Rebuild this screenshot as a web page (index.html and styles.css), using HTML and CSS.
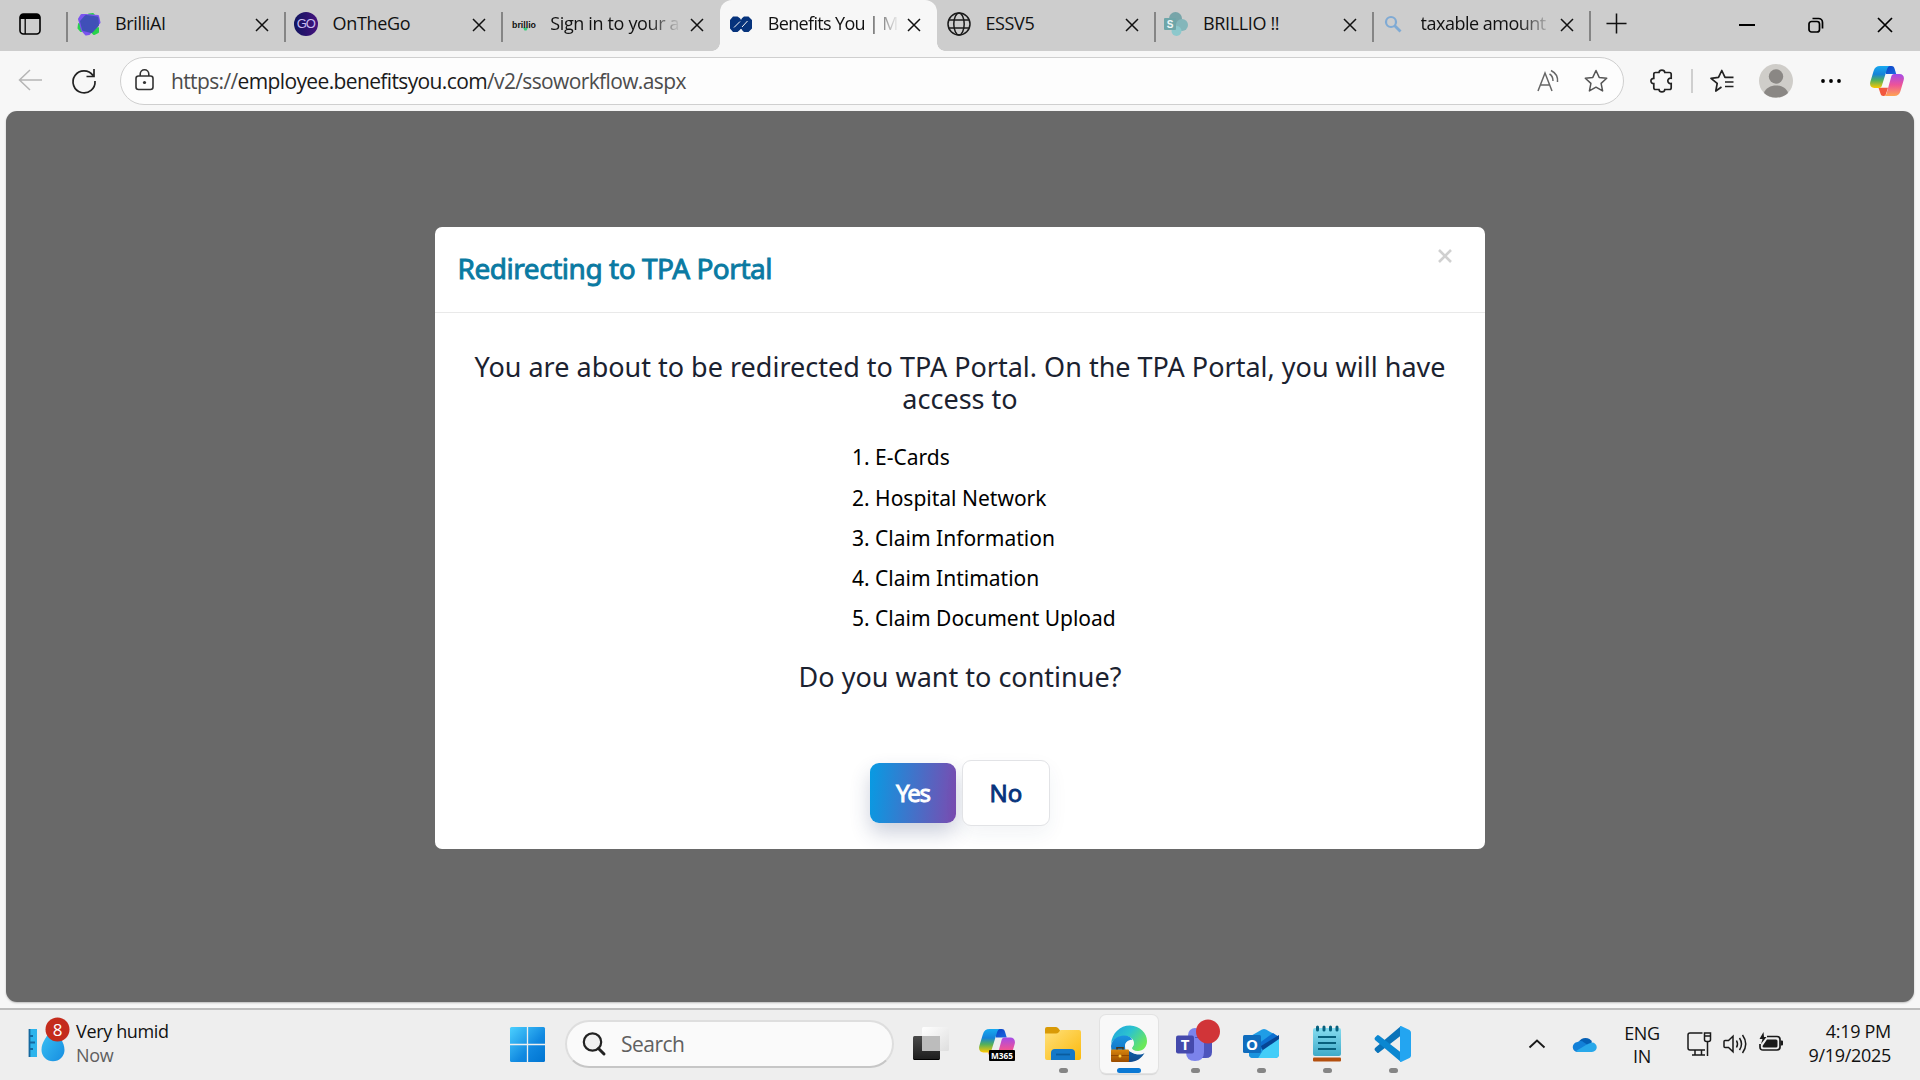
FILE: index.html
```html
<!DOCTYPE html>
<html lang="en">
<head>
<meta charset="utf-8">
<title>Benefits You</title>
<link rel="stylesheet" href="styles.css">
</head>
<body>
<svg class="defs" width="0" height="0">
  <defs>
    <linearGradient id="cpTop" x1="0" y1="0" x2="0" y2="1"><stop offset="0" stop-color="#17a9f0"/><stop offset=".38" stop-color="#1683d8"/><stop offset=".65" stop-color="#52b05c"/><stop offset="1" stop-color="#ffc800"/></linearGradient>
    <linearGradient id="cpBot" x1="0" y1="0" x2="0" y2="1"><stop offset="0" stop-color="#a54be8"/><stop offset=".5" stop-color="#ee5398"/><stop offset="1" stop-color="#ffa552"/></linearGradient>
    <linearGradient id="cpBlue" x1="0" y1="0" x2="1" y2="1"><stop offset="0" stop-color="#0b3fc4"/><stop offset="1" stop-color="#1b6be0"/></linearGradient>
    <linearGradient id="win" x1="0" y1="0" x2="1" y2="1"><stop offset="0" stop-color="#4bd0ff"/><stop offset=".6" stop-color="#1088e0"/><stop offset="1" stop-color="#0074d1"/></linearGradient>
    <linearGradient id="folder" x1="0" y1="0" x2="1" y2="1"><stop offset="0" stop-color="#ffe07a"/><stop offset="1" stop-color="#fbb90c"/></linearGradient>
    <linearGradient id="edgeTop" x1="0" y1="0" x2="1" y2=".6"><stop offset="0" stop-color="#1d9fe0"/><stop offset=".5" stop-color="#2cc3cf"/><stop offset="1" stop-color="#6be85a"/></linearGradient>
    <linearGradient id="edgeLow" x1="0" y1="0" x2="0" y2="1"><stop offset="0" stop-color="#0a63ae"/><stop offset="1" stop-color="#124a8c"/></linearGradient>
    <linearGradient id="edgeMid" x1="0" y1="0" x2="0" y2="1"><stop offset="0" stop-color="#1b93e0"/><stop offset="1" stop-color="#0b63b5"/></linearGradient>
    <linearGradient id="case" x1="0" y1="0" x2="0" y2="1"><stop offset="0" stop-color="#d9860d"/><stop offset="1" stop-color="#9a4c00"/></linearGradient>
    <linearGradient id="drop" x1="0" y1="0" x2="1" y2="1"><stop offset="0" stop-color="#3cc4f5"/><stop offset="1" stop-color="#178de0"/></linearGradient>
    <linearGradient id="note" x1="0" y1="0" x2="0" y2="1"><stop offset="0" stop-color="#86dcf0"/><stop offset="1" stop-color="#3fabc9"/></linearGradient>
    <linearGradient id="dark" x1="0" y1="0" x2="0" y2="1"><stop offset="0" stop-color="#4a4a4a"/><stop offset="1" stop-color="#1c1c1c"/></linearGradient>
    <linearGradient id="glass" x1="0" y1="0" x2="1" y2="1"><stop offset="0" stop-color="#fff"/><stop offset="1" stop-color="#dedede"/></linearGradient>
    <linearGradient id="go" x1="0" y1="0" x2="1" y2="0"><stop offset="0" stop-color="#10155f"/><stop offset="1" stop-color="#46127e"/></linearGradient>
    <symbol id="x" viewBox="0 0 14 14"><path d="M1 1l12 12M13 1L1 13" fill="none" stroke="#111" stroke-width="1.5"/></symbol>
    <symbol id="copilot" viewBox="0 0 34 30">
      <path d="M15 0h6.500c2 0 2.700 1.200 3.200 3l1.500 5H16z" fill="url(#cpBlue)"/>
      <path d="M8.500 21.800H18l-2 6.200c-.5 1.400-1.300 2-2.600 2-2 0-2.600-1.200-3.100-3z" fill="#f2583e"/>
      <path d="M24 8h5.500c3.400 0 5.100 2.500 4.200 6l-3.200 11c-.9 3.500-3 5-6.200 5h-10.500c1.600 0 2.400-1.200 3-3.200l4.400-16C21.800 8.800 22.500 8 24 8z" fill="url(#cpBot)"/>
      <path d="M10 0h10c-1.600 0-2.300 1.300-3 3.300l-4.700 15C11.600 20.800 11 22 9 22H4.200C1 22-.6 19.500.3 16L3.600 5C4.600 1.500 6.700 0 10 0z" fill="url(#cpTop)"/>
    </symbol>
  </defs>
</svg>

<header class="tabstrip">
  <svg class="tab-actions" viewBox="0 0 22 22"><rect x="1" y="1" width="20" height="20" rx="3.500" fill="none" stroke="#000" stroke-width="1.600"/><path d="M1 6V4.500A3.500 3.500 0 0 1 4.500 1h13A3.500 3.500 0 0 1 21 4.500V6z"/><path d="M6.200 6v15" stroke="#000" stroke-width="1.300"/></svg>
  <nav class="tabs">
    <div class="tab">
      <svg class="fav" viewBox="0 0 24 24"><g stroke-width="2" stroke-linejoin="round"><path d="M12 2.500l4-.5 3 4-5 2zM2 12l4 6-2 1-2.500-3zM21 16v4l-4 2-2-2z" fill="#27d34b" stroke="#27d34b"/><path d="M4.500 3H9l12 1 1.500 6.500L12 22l-3 .5-4-4.500L2 7z" fill="#7a54ee" stroke="#7a54ee"/></g><path d="M9 4.500l11 1.500.500 7-6 6.500-8-2-2-8z" fill="#4050b8" stroke="#4050b8" stroke-width="3" stroke-linejoin="round"/></svg>
      <span class="title">BrilliAI</span><svg class="close"><use href="#x"/></svg>
    </div>
    <div class="tab">
      <svg class="fav" viewBox="0 0 24 24"><circle cx="12" cy="12" r="12" fill="url(#go)"/><text x="11.800" y="16" class="go-text">GO</text></svg>
      <span class="title">OnTheGo</span><svg class="close"><use href="#x"/></svg>
    </div>
    <div class="tab">
      <svg class="fav" viewBox="0 0 24 24"><path d="M11 15.500h5l-1.500 3h-2z" fill="#35d07a"/><text x="0" y="16" class="brillio-text" textLength="24" lengthAdjust="spacingAndGlyphs">brillio</text></svg>
      <span class="title fade">Sign in to your a</span><svg class="close"><use href="#x"/></svg>
    </div>
    <div class="tab active">
      <svg class="fav" viewBox="0 0 24 24"><path d="M4 4.500h4.500L12 7l3-2.500h4.500L23 8v8.500L19.500 20H15l-3-3-3.500 3H4l-3-3.500V8z" fill="#06337c"/><path d="M5 15.500l6-6M13 15l5.500-6M12 4v3.500M12 17v3.500" stroke="#f7f7f7" stroke-width="1"/></svg>
      <span class="title fade tight">Benefits You | M</span><svg class="close"><use href="#x"/></svg>
    </div>
    <div class="tab nosep">
      <svg class="fav" viewBox="0 0 24 24"><g fill="none" stroke="#1a1a1a" stroke-width="1.500"><circle cx="12" cy="12" r="11"/><ellipse cx="12" cy="12" rx="5.200" ry="11"/><path d="M2 8h20M2 16h20"/></g></svg>
      <span class="title">ESSV5</span><svg class="close"><use href="#x"/></svg>
    </div>
    <div class="tab">
      <svg class="fav" viewBox="0 0 24 24"><circle cx="11.500" cy="6.500" r="6.500" fill="#77a5a9"/><circle cx="18" cy="13" r="6" fill="#83b6ba"/><circle cx="12.500" cy="19" r="5" fill="#8cc8cc"/><rect y="6" width="12" height="12" rx="1" fill="#6ea6a9"/><text x="6" y="15.500" class="sp-text">S</text></svg>
      <span class="title">BRILLIO !!</span><svg class="close"><use href="#x"/></svg>
    </div>
    <div class="tab">
      <svg class="fav" viewBox="0 0 24 24"><g fill="none" stroke="#7faad4" stroke-width="2.200"><circle cx="9" cy="10" r="5"/><path d="M12.500 13.500l6 6" stroke-width="2.800"/></g></svg>
      <span class="title fade tax">taxable amount</span><svg class="close"><use href="#x"/></svg>
    </div>
    <div class="newtab"><svg viewBox="0 0 22 22"><path d="M11 .5v21M.5 11h21" stroke="#111" stroke-width="1.600"/></svg></div>
  </nav>
  <div class="winctl">
    <svg viewBox="0 0 16 16"><path d="M0 8h16" stroke="#000" stroke-width="2"/></svg>
    <svg viewBox="0 0 16 16"><g fill="none" stroke="#000" stroke-width="1.700"><rect x="1" y="4.500" width="10.500" height="10.500" rx="2.500"/><path d="M4.500 1.500h6a4 4 0 0 1 4 4v6"/></g></svg>
    <svg viewBox="0 0 16 16"><path d="M1 1l14 14M15 1L1 15" stroke="#000" stroke-width="1.700"/></svg>
  </div>
</header>

<section class="toolbar">
  <svg class="i24 back" viewBox="0 0 24 24"><path d="M12 2L1.500 12 12 22M1.500 12H24" fill="none" stroke="#b5b5b5" stroke-width="1.500"/></svg>
  <svg class="i24 refresh" viewBox="0 0 24 24"><path d="M21 6.500A11 11 0 1 0 23 12M22 0v7.500h-7.500" fill="none" stroke="#222" stroke-width="1.700"/></svg>
  <div class="address">
    <svg class="lock" viewBox="0 0 19 22"><g fill="none" stroke="#333" stroke-width="1.600"><rect x="1" y="7" width="17" height="13.500" rx="2.500"/><path d="M5.200 7V5a4.300 4.300 0 0 1 8.600 0v2"/></g><circle cx="9.500" cy="13.500" r="1.600" fill="#333"/></svg>
    <span class="url">https://<b>employee.benefitsyou.com</b>/v2/ssoworkflow.aspx</span>
    <svg class="i24 read" viewBox="0 0 24 24"><g fill="none" stroke="#666" stroke-width="1.500"><path d="M1 22L8 4l7 18M3.500 16h9M12.500 5c2.500 1.500 3.500 4 3.500 7M14 1.500c5 2.500 7 7 6.500 11.500"/></g></svg>
    <svg class="i24" viewBox="0 0 24 24"><path d="M12 1.500l3.200 6.900 7.500.9-5.600 5.100 1.500 7.500L12 18.200l-6.600 3.700 1.500-7.500L1.300 9.300l7.500-.9z" fill="none" stroke="#555" stroke-width="1.500" stroke-linejoin="round"/></svg>
  </div>
  <svg class="i24 puzzle" viewBox="0 0 24 24"><path d="M5.500 3.500H9C9.300.3 14.500.3 14.800 3.500h4.700c1 0 1.700.7 1.700 1.700v4c-4.500-.7-4.500 6 0 5.300v4.300c0 1-.7 1.700-1.700 1.700h-4.700c-.3 3.200-5.500 3.200-5.800 0H5.500c-1 0-1.700-.7-1.700-1.700v-4.100C0 14.700 0 9.300 3.800 9.300V5.200c0-1 .7-1.700 1.700-1.700z" fill="none" stroke="#222" stroke-width="1.700"/></svg>
  <i class="vsep"></i>
  <svg class="i24 favs" viewBox="0 0 24 24"><path d="M11.500 18L5.800 22l1.400-7.600L1 9.300l7.500-.9L11.800 1.500 15 8.400h8.500M15 13h8.500M15 17.500h8.500" fill="none" stroke="#222" stroke-width="1.700" stroke-linejoin="round"/></svg>
  <svg class="avatar" viewBox="0 0 34 34"><circle cx="17" cy="17" r="17" fill="#cfcdc9"/><circle cx="17" cy="12.500" r="7.200" fill="#8a8784"/><path d="M5 29c3-10 21-10 24 0-6 6-18 6-24 0z" fill="#8a8784"/></svg>
  <svg class="dots" viewBox="0 0 20 6"><circle cx="2" cy="3" r="1.900"/><circle cx="10" cy="3" r="1.900"/><circle cx="18" cy="3" r="1.900"/></svg>
  <svg class="copilot"><use href="#copilot"/></svg>
</section>

<main class="viewport">
  <div class="page">
    <div class="modal">
      <div class="modal-head">
        <h1>Redirecting to TPA Portal</h1>
        <svg class="modal-x" viewBox="0 0 14 14"><path d="M1 1l12 12M13 1L1 13" stroke="#d0d0d0" stroke-width="2.600"/></svg>
      </div>
      <div class="modal-body">
        <p class="lead">You are about to be redirected to TPA Portal. On the TPA Portal, you will have<br>access to</p>
        <ol><li>1. E-Cards</li><li>2. Hospital Network</li><li>3. Claim Information</li><li>4. Claim Intimation</li><li>5. Claim Document Upload</li></ol>
        <p class="ask">Do you want to continue?</p>
        <div class="actions"><button class="yes">Yes</button><button class="no">No</button></div>
      </div>
    </div>
  </div>
</main>

<footer class="taskbar">
  <div class="weather">
    <svg viewBox="0 0 42 54"><path d="M1 13h8v28H1z" fill="#2db4ec"/><path d="M1.500 13v28M1 20h4M1 26.500h6M1 33h4" stroke="#14689f" stroke-width="1.800" fill="none"/><path d="M25 12c6 8 11.500 14 11.500 22a11.500 11.200 0 0 1-23 0C13.500 26 19 20 25 12z" fill="url(#drop)"/><circle cx="29.500" cy="13.500" r="12" fill="#c42b1c"/><text x="29.500" y="19.500" class="badge-text">8</text></svg>
    <div class="wtext"><span>Very humid</span><span class="dim">Now</span></div>
  </div>
  <div class="center">
    <svg class="winlogo" viewBox="0 0 35 35"><rect width="35" height="35" rx="1.500" fill="url(#win)"/><path d="M17.500 0v35M0 17.500h35" stroke="#eee" stroke-width="1.300"/></svg>
    <div class="search"><svg viewBox="0 0 24 24"><circle cx="10.500" cy="10" r="8.700" fill="#f1f1f1" stroke="#222" stroke-width="2.200"/><path d="M16.500 16.500l5.500 5.500" stroke="#222" stroke-width="3" stroke-linecap="round"/></svg><span>Search</span></div>
    <div class="apps">
      <div class="app"><svg viewBox="0 0 36 36"><rect y="10" width="27" height="24" rx="1.500" fill="url(#dark)"/><path d="M1 33.500h25" stroke="#000"/><rect x="9" y="1" width="27" height="24" rx="1.500" fill="url(#glass)"/><path d="M9 10h18v15H10q-1 0-1-1z" fill="#bcbcbc"/></svg></div>
      <div class="app"><svg viewBox="0 0 36 36"><svg x="0" y="1" width="36" height="31"><use href="#copilot"/></svg><rect x="10" y="24" width="26" height="11" rx="1" fill="#000"/><text x="23" y="33" class="m365" textLength="22" lengthAdjust="spacingAndGlyphs">M365</text></svg></div>
      <div class="app run"><svg viewBox="0 0 36 36"><path d="M0 3q0-2 2-2h9q1.500 0 2.500 1.500L15 4.500V10H0z" fill="#d99a06"/><path d="M0 7.500h11q1.500 0 2.500-1L15.500 4H34q2 0 2 2v26q0 2-2 2H2q-2 0-2-2z" fill="url(#folder)"/><path d="M6 34v-7q0-4 4-4h16q4 0 4 4v7z" fill="#1478c8"/><path d="M11 28.500h14" stroke="#0a5c9e" stroke-width="1.800"/></svg></div>
      <div class="app run current"><svg viewBox="0 0 36 36"><path d="M0 18C1 7 9-.5 19-.5 29 0 36 7 36 15c0 6-4 10-9 10-4 0-6-1.500-6-3 0-1 2-2 2-5 0-4-4-7-9-7C7 10 2 14 0 18z" fill="url(#edgeTop)"/><path d="M0 20c1-7 7-10.500 13-10.500 4 0 7 1.500 8.500 4.200-4-.2-7.500 2.500-7.500 6.300C14 29 20 35 27 33c-10 6-27 2-27-13z" fill="url(#edgeMid)"/><path d="M18 21c1 5 5 7.500 10 7.500 2 0 4-.5 5.500-1.500C31 32 25 36 19 36h-6z" fill="url(#edgeLow)"/><path d="M22.500 18.500c0 2-1.700 2.500-1.700 4 0 2 3 3.300 6.500 3.300 2.700 0 5-.6 6.700-1.800-1 2.700-3 4-6 4-6 0-13-3.500-13.700-8.500a4.200 4.800 0 0 1 8.200-1z" fill="#f8f8f8"/><rect y="23.500" width="18" height="12.500" rx="1" fill="url(#case)"/><path d="M0 29.500h18" stroke="#8a4300" stroke-width=".8"/><path d="M6 23.500v-1.700h6v1.700" fill="none" stroke="#47351c" stroke-width="1.600"/><circle cx="9" cy="30" r="1.500" fill="#ffd042"/></svg></div>
      <div class="app run"><svg class="teams" viewBox="0 0 46 44"><circle cx="20" cy="17" r="7" fill="#7b83eb"/><path d="M20 19h17v15q0 6-6 6h-8z" fill="#4e55bd"/><path d="M11 20h18v14q0 9-9 9t-9-9z" fill="#7b83eb"/><rect x="1" y="17.500" width="18" height="18" rx="2" fill="#4449ac"/><text x="10" y="31.500" class="tile">T</text><circle cx="33" cy="13.500" r="12" fill="#d13438"/></svg></div>
      <div class="app run"><svg viewBox="0 0 36 36"><path d="M6 11L19 3.500q2-1 4 0L36 11v17q0 4-4 4H10q-4 0-4-4z" fill="#1f9de6"/><path d="M15 18L30 7l6 4-19 13z" fill="#0d6fd0"/><path d="M18 20L36 9v5L20 25z" fill="#064594"/><path d="M36 13v15q0 4-4 4H15l5-8z" fill="#42cdf8"/><path d="M6 26l14-2-5 8h-5q-4 0-4-4z" fill="#1994df"/><rect y="9" width="18" height="18" rx="1.500" fill="#0f6cbd"/><text x="9" y="23.500" class="tile">O</text></svg></div>
      <div class="app run"><svg viewBox="0 0 36 36"><rect x="4" y="28" width="28" height="6" fill="#eee"/><rect x="4" y="31.500" width="28" height="4" rx="1" fill="#b4500f"/><rect x="4" y="2" width="28" height="28" rx="2" fill="url(#note)"/><path d="M9 11h18M9 17h18M9 23h18" stroke="#07607d" stroke-width="2"/><path d="M8.500 1v3M15 1v3M21.500 1v3M28 1v3" stroke="#07607d" stroke-width="3" stroke-linecap="round"/></svg></div>
      <div class="app run"><svg viewBox="0 0 36 36"><path d="M0 24.500q-1-1.200 0-2.500L26 0v9.500L4 26.500q-1.200 1-2 0z" fill="#0a73b9"/><path d="M0 11.500q-1 1.200 0 2.500L26 36v-9.500L4 9.500q-1.200-1-2 0z" fill="#0b87d1"/><path d="M26 0l8.500 4Q36 5 36 6.500v23q0 1.500-1.500 2.500L26 36q-1 0-1-1V1q0-1 1-1z" fill="#23a5f1"/></svg></div>
    </div>
  </div>
  <div class="tray">
    <svg class="chev" viewBox="0 0 18 10"><path d="M1.500 8.500L9 1.500l7.500 7" fill="none" stroke="#1a1a1a" stroke-width="1.900"/></svg>
    <svg class="cloud" viewBox="0 0 24 16"><path d="M6 6a7 6.200 0 0 1 13 0l-4 6-8-2z" fill="#0560b5"/><path d="M5 16a5 5 0 0 1-.5-10Q8 4 11 6.500L18 11l-8 5z" fill="#1280d8"/><path d="M3 15l10-6q3-2 6-2.500a4.700 4.700 0 0 1 0 9.500H5q-1 0-2-1z" fill="#28a8ea"/></svg>
    <div class="lang"><span>ENG</span><span>IN</span></div>
    <div class="sys">
      <svg viewBox="0 0 24 24"><g fill="none" stroke="#1a1a1a" stroke-width="1.500"><path d="M15.500 1H3Q1 1 1 3v13q0 2 2 2h15M8 18v4.500M14.500 18v4.500M5 23h13M20.500 10v14M17.500 1h6v6.500q0 2-2 2h-2q-2 0-2-2zM17.500 4h6"/></g></svg>
      <svg viewBox="0 0 24 24"><g fill="none" stroke="#1a1a1a" stroke-width="1.500"><path d="M1 9.500q0-1 1-1h3.500L10 4.200v15.600l-4.500-4.300H2q-1 0-1-1zM13.500 8.500q2 3.500 0 7M16.500 6q4 6 0 12M19.500 3q6.500 9 0 18"/></g></svg>
      <svg viewBox="0 0 24 24"><path d="M8 4.500h10q3 0 3 3V15q0 3-3 3H4q-3 0-3-3v-3" fill="none" stroke="#1a1a1a" stroke-width="1.700"/><path d="M8 7.500h9q1.500 0 1.500 1.500v5q0 1.500-1.500 1.500H5q-1.500 0-1.500-1.500zM21.500 8.500h1.500q1 0 1 1v3q0 1-1 1h-1.500zM4.500 0L.5 7h3L2 12l5.500-7H5z" fill="#1a1a1a"/></svg>
    </div>
    <div class="clock"><span>4:19 PM</span><span>9/19/2025</span></div>
  </div>
</footer>
</body>
</html>
```
FILE: styles.css
```css
* { box-sizing: border-box; }
html, body { margin: 0; height: 100%; overflow: hidden; }
body {
  width: 1920px; height: 1080px; display: flex; flex-direction: column;
  background: #f7f7f7; color: #111; font-family: "Open Sans", "Noto Sans", sans-serif;
}
svg { display: block; flex: none; overflow: visible; }
.defs { height: 0; }

/* Tab strip */
.tabstrip { height: 51px; flex: none; display: flex; background: #cdcdcd; }
.tab-actions { width: 22px; height: 22px; margin: 13px 26px 0 19px; }
.tabs { display: flex; }
.tab {
  width: 217.600px; height: 51px; display: flex; align-items: center;
  padding: 0 16px 3px 10px; position: relative; border-radius: 12px 12px 0 0;
}
.tab::before { content: ""; width: 2px; height: 30px; background: #858585; margin: 6px 0 0 -11px; }
.fav { width: 24px; height: 24px; margin-left: 8.500px; }
.title { margin-left: 14.500px; font-size: 18px; line-height: 24px; white-space: nowrap; letter-spacing: -.35px; margin-top: -2px; }
.fade { -webkit-mask-image: linear-gradient(90deg, #000 98px, transparent 131px); mask-image: linear-gradient(90deg, #000 98px, transparent 131px); }
.tight { letter-spacing: -.66px; }
.tax { letter-spacing: -.5px; }
.close { width: 14px; height: 14px; margin: 2px 0 0 auto; }
.active { background: #f7f7f7; }
.active::before, .nosep::before { visibility: hidden; }
.active::after {
  content: ""; position: absolute; left: -8px; right: -8px; bottom: 0; height: 8px;
  background:
    radial-gradient(circle at 0 0, transparent 7.500px, #f7f7f7 8px) left / 8px 8px no-repeat,
    radial-gradient(circle at 100% 0, transparent 7.500px, #f7f7f7 8px) right / 8px 8px no-repeat;
}
.newtab { display: flex; }
.newtab::before { content: ""; width: 2px; height: 30px; margin-top: 11px; margin-left: -1px; background: #858585; }
.newtab svg { width: 21px; height: 21px; margin: 13px 0 0 15px; }
.winctl { display: flex; gap: 53px; margin: 17px 27px 0 auto; }
.winctl svg { width: 16px; height: 16px; }
.go-text { font: 13px "Liberation Sans", sans-serif; fill: #c9bdf0; text-anchor: middle; letter-spacing: -1px; }
.brillio-text { font: bold 9px "Liberation Sans", sans-serif; fill: #111; }
.sp-text { font: bold 10px "Liberation Sans", sans-serif; fill: #eef7f7; text-anchor: middle; }

/* Toolbar */
.toolbar { height: 60px; flex: none; display: flex; align-items: center; padding-left: 18px; }
.i24 { width: 24px; height: 24px; }
.back { margin-top: -2px; }
.refresh { margin-left: 30px; }
.address {
  width: 1504px; height: 48px; margin-left: 24px; padding: 0 15px 0 14px; display: flex; align-items: center;
  background: #fdfdfd; border: 1.500px solid #cfcfcf; border-radius: 24px;
}
.lock { width: 19px; height: 22px; margin-top: -3px; }
.url { margin: 0 auto 0 17px; font-size: 21px; line-height: 28px; color: #4c4c4c; letter-spacing: -.63px; white-space: nowrap; }
.url b { font-weight: 400; color: #1a1a1a; }
.read { margin-right: 23px; }
.puzzle { margin-left: 26px; }
.vsep { width: 2px; height: 24px; margin-left: 17px; background: #cfcfcf; }
.favs { margin-left: 17px; }
.avatar { width: 34px; height: 34px; margin-left: 25px; }
.dots { width: 20px; height: 6px; margin-left: 28px; }
.copilot { width: 34px; height: 30px; margin-left: 29px; }

/* Web page */
.viewport { height: 897px; flex: none; padding: 0 6px; }
.page {
  height: 891px; border-radius: 11px; background: #696969; display: flex; justify-content: center;
  align-items: flex-start; padding-top: 116px; box-shadow: 0 1px 2px #bbb;
}
.modal { width: 1050px; height: 622px; background: #fff; border-radius: 7px; overflow: hidden; font-family: "Noto Sans", sans-serif; }
.modal-head { height: 86px; display: flex; justify-content: space-between; border-bottom: 1px solid #e9e9e9; padding: 0 33.500px 0 22.500px; }
h1 { margin: 22px 0 0; font-weight: 400; font-size: 28px; line-height: 38px; color: #0a7aa2; -webkit-text-stroke: .9px #0a7aa2; letter-spacing: -.46px; white-space: nowrap; }
.modal-x { width: 14px; height: 14px; margin-top: 22px; }
.modal-body { display: flex; flex-direction: column; align-items: center; color: #1b2230; }
.lead, .ask { margin: 0; font-size: 27px; line-height: 32.400px; text-align: center; white-space: nowrap; }
.lead { margin-top: 38px; }
ol { list-style: none; margin: 21.500px 0 0 54px; padding: 0; color: #000; font-size: 21px; line-height: 40.200px; width: 270px; white-space: nowrap; }
.ask { margin-top: 22.800px; }
.actions { display: flex; align-items: center; gap: 6px; margin-top: 66px; }
button { padding: 0; font: 24px/32px "Noto Sans", sans-serif; border-radius: 9px; -webkit-text-stroke: .9px currentColor; }
.yes { width: 86px; height: 60px; border: 0; color: #fff; letter-spacing: -1.200px; background: linear-gradient(95deg, #079be3, #7b4bb0); box-shadow: 0 10px 20px rgba(40, 60, 110, .24); }
.no { width: 88px; height: 66px; border: 1px solid #e2e3e6; color: #06337c; background: #fff; box-shadow: 0 8px 20px rgba(40, 60, 110, .06); }

/* Taskbar */
.taskbar { height: 72px; flex: none; display: flex; border-top: 2px solid #bdbdbd; background: #eee; font-size: 18px; }
.weather { width: 510px; display: flex; padding: 5px 0 0 28px; }
.weather svg { width: 42px; height: 54px; margin-top: 1px; }
.wtext { display: flex; flex-direction: column; line-height: 24px; margin: 4px 0 0 6px; letter-spacing: -.35px; }
.wtext .dim { color: #5f5f5f; }
.badge-text { font: 17px "Open Sans", sans-serif; fill: #fff; text-anchor: middle; }
.center { display: flex; }
.winlogo { width: 35px; height: 35px; margin-top: 17px; }
.search {
  width: 329px; height: 48px; margin: 10px 0 0 20px; padding-left: 15px; display: flex; align-items: center;
  background: #fafafa; border: 2px solid #dedede; border-bottom-color: #c6c6c6; border-radius: 24px;
  font-size: 21px; color: #606060; letter-spacing: -.5px;
}
.search svg { width: 24px; height: 24px; }
.search span { margin: 0 0 0 15px; }
.apps { display: flex; margin: 5px 0 0 4px; }
.app { width: 58px; height: 58px; margin: 0 4px; border-radius: 6px; display: flex; flex-direction: column; align-items: center; padding-top: 11px; }
.app svg { width: 36px; height: 36px; }
.app .teams { width: 46px; height: 44px; margin: -8px 0 0 6px; }
.run::after { content: ""; width: 9px; height: 5px; border-radius: 3px; background: #858585; margin: auto 0 0; }
.current { background: #f8f8f8; box-shadow: 0 0 0 1px #e2e2e2, 0 2px 1px #d6d6d6; }
.current::after { width: 24px; background: #0a78d4; }
.m365 { font: bold 9.500px "Open Sans", sans-serif; fill: #fff; text-anchor: middle; }
.tile { font: bold 15px "Open Sans", sans-serif; fill: #fff; text-anchor: middle; }
.tray { display: flex; margin-left: auto; padding-right: 29px; }
.chev { width: 18px; height: 10px; margin-top: 29px; }
.cloud { width: 24px; height: 16px; margin: 26px 0 0 27px; }
.lang, .clock { display: flex; flex-direction: column; line-height: 23px; margin-top: 12px; white-space: nowrap; }
.lang { width: 40px; margin-left: 25px; align-items: center; letter-spacing: -.3px; }
.sys { display: flex; gap: 12px; margin: 22px 0 0 25px; }
.sys svg { width: 24px; height: 24px; }
.clock { width: 108px; align-items: flex-end; margin-top: 9px; line-height: 24px; letter-spacing: -.3px; }
```
